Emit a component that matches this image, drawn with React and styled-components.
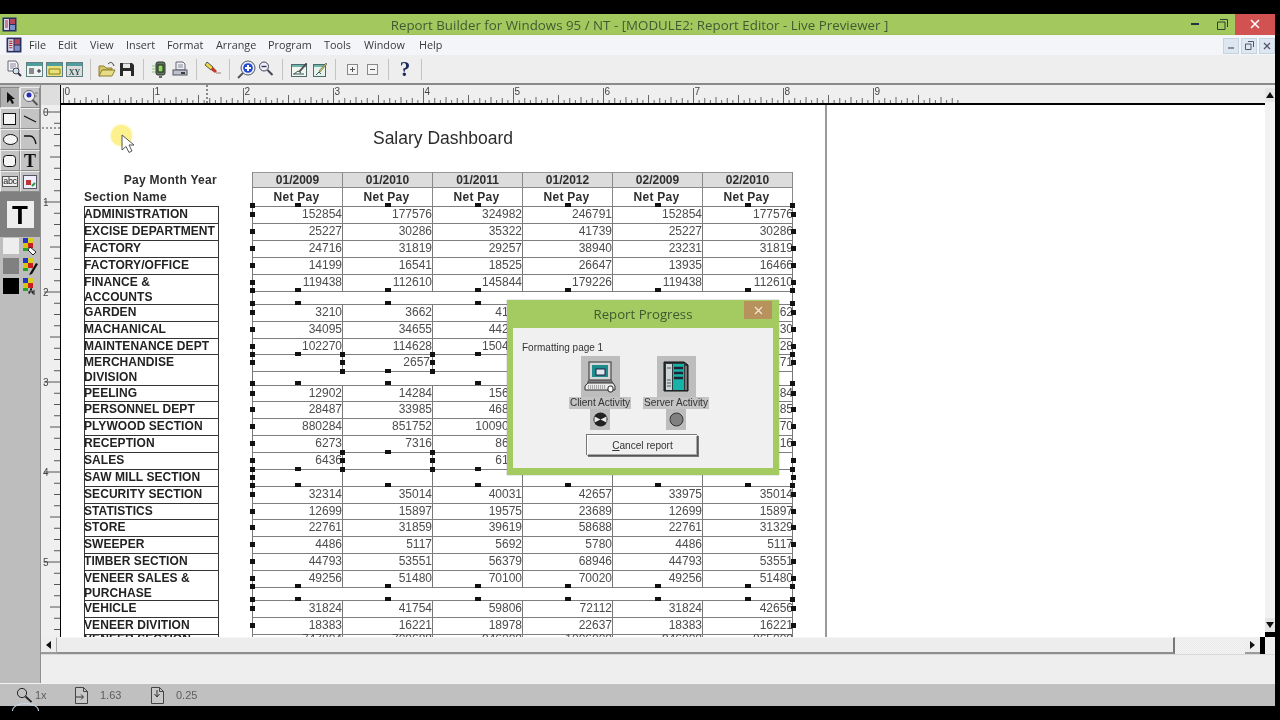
import React from "react";
import styled, { createGlobalStyle } from "styled-components";

const Global = createGlobalStyle`
  html, body { margin: 0; padding: 0; background: #000; }
  * { box-sizing: border-box; }
`;

const Screen = styled.div`
  position: relative; width: 1280px; height: 720px; background: #000; overflow: hidden;
  padding: 14px 5px 14px 0; display: flex; flex-direction: column;
  font-family: "Liberation Sans", Arial, sans-serif; filter: blur(.3px);
`;
const TitleBar = styled.div`
  height: 21px; flex: none; background: #a3c95e; display: flex; align-items: center; position: relative;
  padding-left: 2px; border-bottom: 1px solid #9cc056;
`;
const TitleText = styled.div`
  position: absolute; left: 0; right: 0; top: 2px; text-align: center; padding-left: 4px;
  font: 13.3px "Open Sans", sans-serif; color: #3f5a33; letter-spacing: 0.02px; white-space: nowrap;
`;
const WinControls = styled.div`
  margin-left: auto; display: flex; height: 100%; align-items: center;
`;
const WinBtn = styled.div`
  width: ${p => p.$w}px; height: 21px; display: flex; align-items: center; justify-content: center;
  background: ${p => p.$bg || "transparent"};
`;
const MenuBar = styled.div`
  height: 20px; flex: none; background: #f3f5f9; display: flex; align-items: center; padding-left: 6px;
`;
const MenuIcon = styled.div`width: 23px; height: 17px; display: flex;`;
const MenuItems = styled.div`display: flex; font: 10.8px "Open Sans", sans-serif; color: #3a3a3a; margin-top: -2px;`;
const MenuItem = styled.span`width: ${p => p.$w}px; white-space: nowrap;`;
const MdiButtons = styled.div`margin-left: auto; display: flex; gap: 2px; padding-top: 1px;`;
const MdiBtn = styled.div`
  width: 16px; height: 16px; background: #dde7f1; border: 1px solid #c6d3e0; display: flex;
  align-items: center; justify-content: center;
`;
const Toolbar = styled.div`
  height: 30px; flex: none; background: #eeeeee; display: flex; align-items: center; padding-left: 4px;
  border-bottom: 2px solid #8a8a8a;
`;
const ToolBtn = styled.div`
  width: 20px; height: 20px; display: flex; align-items: center; justify-content: center; flex: none;
`;
const Sep = styled.div`
  width: 1px; height: 21px; background: #c4c4c4; margin: 0 6px; flex: none;
`;
const Help = styled.span`font: bold 21px "Liberation Serif", serif; color: #1d2a5c; line-height: 20px;`;

const Workspace = styled.div`flex: 1; min-height: 0; display: flex;`;
const Palette = styled.div`
  width: 41px; flex: none; background: #bdbdbd; display: flex; flex-direction: column;
  border-right: 1px solid #8f8f8f;
`;
const ToolGrid = styled.div`
  display: grid; grid-template-columns: 20px 20px; grid-auto-rows: 21px; padding-top: 2px; background: #c8c8c8;
  height: 107px;
`;
const PalBtn = styled.div`
  display: flex; align-items: center; justify-content: center; background: ${p => p.$on ? "#b0b0b0" : "#c4c4c4"};
  border: 1px solid; border-color: ${p => p.$on ? "#888 #eee #eee #888" : "#eee #8c8c8c #8c8c8c #eee"};
`;
const SerifT = styled.span`font: bold 18px "Liberation Serif", serif; color: #111; line-height: 16px;`;
const AbcTag = styled.span`
  font: 9px "Liberation Sans", sans-serif; color: #222; border: 1px solid #555; background: #eee; line-height: 9px; letter-spacing: -.3px;
`;
const TextTool = styled.div`
  height: 45px; background: #808080; display: flex; align-items: center; justify-content: center;
`;
const TextToolBox = styled.div`
  width: 27px; height: 27px; background: #eeeeee; color: #000; display: flex; align-items: center; justify-content: center;
  font: bold 26px "Liberation Sans", sans-serif; line-height: 26px;
`;
const Swatches = styled.div`display: flex; flex-direction: column; gap: 4px; padding: 1px 0 0 3px;`;
const SwatchRow = styled.div`display: flex; align-items: center; gap: 3px; height: 16px;`;
const Swatch = styled.div`width: 16px; height: 16px; background: ${p => p.$c};`;

const Main = styled.div`flex: 1; min-width: 0; display: flex; flex-direction: column;`;
const ViewColumn = styled.div`flex: 1; min-width: 0; display: flex; flex-direction: column;`;
const RulerRow = styled.div`height: 20px; flex: none; display: flex; background: #efefef;`;
const Corner = styled.div`width: 19px; flex: none; background: #dedede;`;
const HRulerBox = styled.div`flex: 1; border-bottom: 2px solid #000; border-left: 1px solid #000; overflow: hidden;`;
const VTrack = styled.div`
  width: 10px; flex: none; background: #efefef; display: flex; flex-direction: column; align-items: center;
`;
const ViewRow = styled.div`flex: 1; min-height: 0; display: flex;`;
const VRulerBox = styled.div`
  width: 20px; flex: none; background: #efefef; border-right: 1px solid #000; overflow: hidden;
`;
const Canvas = styled.div`flex: 1; min-width: 0; background: #fff; overflow: hidden; position: relative;`;
const Page = styled.div`width: 766px; height: 100%; border-right: 2px solid #9a9a9a; padding: 22px 0 0 23px;`;
const ReportTitle = styled.div`
  width: 718px; text-align: center; font-size: 17.5px; line-height: 22px; color: #2c2c2c; margin-bottom: 23px;
`;
const HeadRow = styled.div`display: flex; height: ${p => p.$h}px; align-items: center;`;
const HeadLabel = styled.div`
  width: 135px; flex: none; font-size: 12px; font-weight: bold; color: #2e2e2e; letter-spacing: .3px;
  text-align: ${p => p.$right ? "right" : "left"}; padding-right: ${p => p.$right ? 2 : 0}px;
`;
const Gutter = styled.div`width: 33px; flex: none;`;
const HeadCells = styled.div`display: flex; height: 100%; border-left: 1px solid #888;`;
const HeadCell = styled.div`
  width: 90px; height: 100%; display: flex; align-items: center; justify-content: center; font-size: 12px; font-weight: bold;
  color: #2e2e2e; border-right: 1px solid #888; border-top: ${p => p.$top ? "1px solid #999" : "none"};
  background: ${p => p.$top ? "#dcdcdc" : "#fff"};
  border-bottom: ${p => p.$top ? "1px solid #888" : "none"};
  letter-spacing: ${p => p.$top ? 0 : .3}px; padding-right: ${p => p.$top ? 0 : 2}px;
`;
const Row = styled.div`display: flex; height: ${p => p.$h}px;`;
const Label = styled.div`
  width: 135px; flex: none; border-top: 1px solid #333; border-right: 1px solid #333; box-shadow: inset 1px 0 #333;
  font-size: 12px; font-weight: bold; color: #222; line-height: 15px; letter-spacing: .07px; white-space: pre; overflow: hidden;
`;
const ClippedText = styled.div`margin-top: -3px;`;
const DataWrap = styled.div`
  width: 541px; flex: none; border-top: 1px solid #7e7e7e; border-left: 1px solid #777; border-right: 1px solid #777;
`;
const Cells = styled.div`
  display: flex; height: 16px; border-bottom: ${p => p.$closed ? "1px solid #7e7e7e" : "none"}; box-sizing: content-box;
`;
const Cell = styled.div`
  width: 90px; flex: none; text-align: right; font-size: 12px; line-height: 15px; color: #4c4c4c;
  border-right: ${p => p.$last ? "none" : "1px solid #777"}; white-space: nowrap; padding-right: ${p => p.$inset ? 2 : 0}px;
`;
const Handle = styled.div.attrs(p => ({ style: { left: p.$x - 2.5 - 61, top: p.$y - 2 - 105 } }))`
  position: absolute; width: ${p => p.$wide ? 6 : 5}px; height: ${p => p.$wide ? 4 : 5}px; background: #111;
`;
const Highlight = styled.div`
  position: absolute; left: 50px; top: 20px; width: 21px; height: 21px; border-radius: 50%; background: #fdf08e;
  box-shadow: 0 0 3px #fdf08e;
`;
const CursorPos = styled.div`position: absolute; left: 60px; top: 29px; width: 14px; height: 20px;`;

const HScroll = styled.div`height: 17px; flex: none; display: flex; background: #efefef;`;
const ScrollArrow = styled.div`
  width: 15px; flex: none; background: #eeeeee; display: flex; align-items: center; justify-content: center;
  border-bottom: 2px solid #9a9a9a;
`;
const Thumb = styled.div`
  width: 1119px; flex: none; background: #ededed; border: 1px solid #f5f5f5; border-right: 2px solid #777; border-bottom: 2px solid #8e8e8e;
  border-left: 1px solid #aaa;
`;
const Dither = styled.div`
  flex: 1; background: repeating-conic-gradient(#f6f6f6 0 25%, #e8e8e8 0 50%) 0 0 / 2px 2px; 
`;
const BlackEnd = styled.div`width: 5px; flex: none; background: #000;`;
const ScrollTail = styled.div`width: 10px; flex: none;`;
const Gap = styled.div`height: 29px; flex: none; background: #eeeeee; border-top: 1px solid #d8d8d8;`;
const VArrow = styled.div`
  width: 10px; height: ${p => p.$h}px; margin-top: ${p => p.$mt || 0}px; display: flex; align-items: center; justify-content: center;
  background: #e6e6e6;
`;
const VThumbArea = styled.div`flex: 1; width: 100%; background: #f2f2f2; position: relative;`;
const VCornerBlack = styled.div`height: 5px; width: 100%; background: #000;`;
const StatusBar = styled.div`
  height: 23px; flex: none; background: #c0c0c0; border-top: 1px solid #f2f2f2; display: flex; align-items: center;
  padding-left: 16px; font: 11px "Liberation Sans", sans-serif; color: #5e5e5e; position: relative;
`;
const StatusSlot = styled.div`width: ${p => p.$w}px; flex: none; display: flex; align-items: center; gap: ${p => p.$gap || 4}px;`;
const Arc = styled.div`
  position: absolute; left: 12px; top: 19px; width: 27px; height: 8px; border-radius: 50% 50% 0 0 / 100% 100% 0 0;
  border: 1px solid #c9d9e6; border-bottom: none; overflow: hidden;
`;

/* Dialog */
const Dialog = styled.div`
  position: absolute; left: 507px; top: 300px; width: 272px; height: 175px; background: #a4ca62;
  padding: 0 6px 7px 6px; display: flex; flex-direction: column; box-shadow: 0 0 1px #777;
`;
const DialogHead = styled.div`
  height: 28px; flex: none; display: flex; align-items: flex-start; justify-content: center; position: relative;
  font: 13.2px "Open Sans", sans-serif; color: #3a5b2e; padding-top: 5px;
`;
const DialogClose = styled.div`
  position: absolute; right: 1px; top: 1px; width: 28px; height: 18px; background: #b8925c; display: flex; align-items: center; justify-content: center;
`;
const DialogBody = styled.div`
  flex: 1; background: #f0f0f0; padding: 14px 0 0 9px; display: flex; flex-direction: column;
`;
const Formatting = styled.div`font-size: 10px; color: #333; line-height: 12px;`;
const Activities = styled.div`display: flex; margin-top: 2px; padding-left: 48px; gap: 14px;`;
const Activity = styled.div`display: flex; flex-direction: column; align-items: center; width: ${p => p.$w}px;`;
const ActivityIcon = styled.div`
  width: 39px; height: 41px; background: #bdbdbd; display: flex; align-items: center; justify-content: center;
`;
const ActivityName = styled.div`
  background: #c4c4c4; font-size: 10.1px; color: #333; line-height: 12px; white-space: nowrap; padding: 0 1px;
`;
const Lamp = styled.div`
  width: 20px; height: 21px; margin-top: 0; background: #bdbdbd; display: flex; align-items: center; justify-content: center;
`;
const CancelRow = styled.div`display: flex; padding-left: 65px; margin-top: 5px;`;
const CancelBtn = styled.div`
  width: 111px; height: 21px; background: #f0f0f0; font-size: 10.1px; color: #333; display: flex; align-items: center; justify-content: center;
  border: 1px solid; border-color: #fff #555 #555 #fff; box-shadow: 1px 1px 0 #777, inset -1px -1px 0 #aaa, -1px -1px 0 #777;
`;
const Under = styled.span`text-decoration: underline;`;

/* Icons */
const Svg = ({ w = 16, h = 16, children, vb }) => (
  <svg width={w} height={h} viewBox={vb || `0 0 ${w} ${h}`} style={{ display: "block" }}>{children}</svg>
);
const IPreview = () => <Svg w={18} h={18}><path d="M3 1h8l2 3v7H3z" fill="#f5f5f5" stroke="#667" /><path d="M5 4h6M5 6h6M5 8h4" stroke="#8a8aa0" /><circle cx="11" cy="11" r="3" fill="#cfe3ee" stroke="#445" /><path d="M13 13l3 3" stroke="#334" strokeWidth="2" /></Svg>;
const IBand = ({ kind }) => (
  <Svg w={17} h={15}>
    <rect x=".5" y=".5" width="16" height="14" fill={kind === "y" ? "#e9e27a" : kind === "xy" ? "#dcdcdc" : "#eef3f0"} stroke="#5f7f80" />
    <rect x="1" y="1" width="15" height="3" fill="#4f9d9d" />
    {kind === "p" && <path d="M3 7h5M3 9h5M3 11h5M11 9h4M13 7v4" stroke="#223" />}
    {kind === "y" && <path d="M3 7h11v5H3z" fill="none" stroke="#8a7a20" />}
    {kind === "xy" && <text x="8.5" y="12.5" textAnchor="middle" fontSize="8" fontWeight="bold" fontFamily="Liberation Serif" fill="#355">XY</text>}
  </Svg>
);
const IFolder = () => <Svg w={18} h={16}><path d="M1 5h5l2 2h6v2H5L2 15H1z" fill="#d7c765" stroke="#8a7f35" /><path d="M4 9h13l-3 6H1z" fill="#e8dc84" stroke="#8a7f35" /><path d="M10 3c2-2 4-2 5 0l1 2" fill="none" stroke="#333" /></Svg>;
const IFloppy = () => <Svg w={14} h={14}><path d="M0 1h12l2 2v11H0z" fill="#2a2a2a" /><rect x="3" y="1.5" width="7" height="4.5" fill="#e8e8e8" /><rect x="3" y="9" width="8" height="5" fill="#f2f2f2" /></Svg>;
const ISignal = () => <Svg w={16} h={17}><path d="M0 5h3M0 8h3M0 11h3" stroke="#86c77a" /><rect x="4" y="1" width="9" height="13" rx="2" fill="#5c7a5c" stroke="#333" /><rect x="6" y="4" width="5" height="7" fill="#8fdb5e" stroke="#222" /><path d="M7 15h3v2H7z" fill="#666" /></Svg>;
const IPrinter = () => <Svg w={16} h={16}><path d="M4 1h7l2 2v6H4z" fill="#eef1f4" stroke="#667" /><path d="M6 4h5M6 6h5" stroke="#889" /><rect x="1" y="9" width="14" height="5" fill="#bcc2c8" stroke="#556" /><path d="M9 12h4" stroke="#111" strokeWidth="1.5" /></Svg>;
const IEraser = () => <Svg w={18} h={16}><path d="M3 1l6 5-2 3-6-5z" fill="#ecd93f" stroke="#555" /><path d="M9 6l4 4-2 2-4-3z" fill="#c0392b" /><path d="M12 12h5" stroke="#c4b5b5" strokeWidth="2" /></Svg>;
const IZoomIn = () => <Svg w={19} h={19}><path d="M6 13l-5 5" stroke="#555" strokeWidth="2" /><circle cx="11" cy="8" r="7" fill="#e6eef6" stroke="#556" /><circle cx="11" cy="8" r="4.8" fill="#2348cc" /><path d="M8 8h6M11 5v6" stroke="#fff" strokeWidth="2" /></Svg>;
const IZoomOut = () => <Svg w={16} h={16}><circle cx="6" cy="5.5" r="4.5" fill="#eef" stroke="#445" /><path d="M3.5 5.5h5" stroke="#334" strokeWidth="1.4" /><path d="M9.5 9l5 5" stroke="#445" strokeWidth="2" /></Svg>;
const IChart = ({ small }) => (
  <Svg w={17} h={17}>
    <rect x={small ? 2.5 : .5} y="3.5" width={small ? 12 : 15} height="12" fill={small ? "#e7f2ea" : "#f2f5f0"} stroke="#4c6a6a" />
    <rect x={small ? 3 : 1} y="4" width={small ? 11 : 14} height="2" fill="#6fb3ad" />
    <path d={small ? "M5 14l3-3 2 2" : "M2 13h11M3 13l4-3 3 2"} stroke="#355" fill="none" />
    <path d="M8 10l7-8 1 1-7 8z" fill={small ? "#d8cf5a" : "#555"} stroke="#333" strokeWidth=".5" />
  </Svg>
);
const IBox = ({ plus }) => <Svg w={11} h={11}><rect x=".5" y=".5" width="10" height="10" fill="#f4f4f4" stroke="#888" /><path d={plus ? "M3 5.5h5M5.5 3v5" : "M3 5.5h5"} stroke="#555" /></Svg>;
const AppIcon = ({ s = 15 }) => (
  <svg width={s} height={s} viewBox="0 0 15 15" style={{ display: "block" }}>
    <rect x=".5" y=".5" width="14" height="14" fill="#26305e" />
    <rect x="2" y="2" width="5" height="11" fill="#d9d4e8" />
    <rect x="8" y="2" width="5" height="5" fill="#b4475e" />
    <rect x="8" y="8" width="5" height="5" fill="#7c8fc9" />
    <path d="M3 4h3M3 6h3M3 8h3M3 10h3" stroke="#a33" />
  </svg>
);
const ArrowTool = () => <Svg w={12} h={14}><path d="M3 1v11l3-3 2 4 2-1-2-4h3z" fill="#111" /></Svg>;
const ZoomTool = () => <Svg w={17} h={17}><circle cx="7" cy="7" r="5.5" fill="#f2f2f2" stroke="#667" /><circle cx="7" cy="6" r="2.5" fill="#2a2ab8" /><path d="M10.5 11l5 5" stroke="#555" strokeWidth="2" /><path d="M13 4h3M13 7h2" stroke="#777" /></Svg>;
const Wheel = ({ kind }) => (
  <Svg w={16} h={17}>
    <rect x="1" y="0" width="5" height="5" fill="#2233cc" /><rect x="6" y="0" width="5" height="5" fill="#d8d21c" />
    <rect x="1" y="5" width="5" height="5" fill="#d8c414" /><rect x="6" y="5" width="5" height="5" fill="#c91f1f" />
    <rect x="1" y="10" width="5" height="3" fill="#28a428" />
    {kind === 0 && <path d="M8 9l6 5-3 3-5-5z" fill="#fff" stroke="#222" />}
    {kind === 1 && <path d="M14 5l-6 10-1 2 3-1 6-10z" fill="#111" />}
    {kind === 2 && <path d="M7 16l2-6 2 6M6 14h6M12 12v5" stroke="#222" fill="none" />}
  </Svg>
);
const Mag = () => <Svg w={16} h={16}><circle cx="6" cy="6" r="4.6" fill="none" stroke="#222" /><path d="M9.5 9.5l6 5.5" stroke="#222" strokeWidth="1.8" /></Svg>;
const PageIcon = ({ down }) => (
  <Svg w={13} h={17}>
    <path d="M.5.5h8l4 4v12H.5z" fill="#c8c8c8" stroke="#444" /><path d="M8.5.5v4h4" fill="none" stroke="#444" />
    {down ? <path d="M6 3v6M3.5 7L6 10l2.5-3" stroke="#333" fill="none" /> : <path d="M1 10h7M6 7.5L8.5 10 6 12.5" stroke="#333" fill="none" />}
  </Svg>
);
const Computer = () => (
  <Svg w={32} h={33}>
    <rect x="5" y="2" width="22" height="18" fill="#d6d6d6" stroke="#333" />
    <rect x="8" y="5" width="16" height="12" fill="#1d8c8c" />
    <rect x="12" y="9" width="9" height="6" fill="#dfe8ef" stroke="#224" />
    <path d="M4 21h24v2H4z" fill="#bbb" stroke="#444" />
    <path d="M1 26l3-3h25l2 3v4H1z" fill="#e8e8e8" stroke="#333" />
    <path d="M4 26h18M4 28h18" stroke="#666" strokeDasharray="1 1" />
    <rect x="24" y="26" width="5" height="6" rx="2" fill="#fff" stroke="#222" />
  </Svg>
);
const Server = () => (
  <Svg w={30} h={33}>
    <path d="M3 2h20l4 3v26H3z" fill="#2e3a3e" stroke="#111" />
    <rect x="5" y="4" width="6" height="26" fill="#cfd6d6" />
    <rect x="12" y="4" width="11" height="26" fill="#17b3a8" />
    <path d="M13 8h9M13 13h9M13 18h9" stroke="#223" strokeWidth="2.4" />
    <path d="M6 8h4M6 20h4M6 23h4M6 26h4" stroke="#556" />
    <rect x="24" y="6" width="2" height="24" fill="#777" />
  </Svg>
);
const LampOn = () => <Svg w={15} h={15}><circle cx="7.5" cy="7.5" r="7" fill="#222" /><path d="M3.5 3l8 0L7.5 7.5zM3.5 12l8 0L7.5 7.5z" fill="#222" /><path d="M1.5 4.5L7.5 7.5 1.5 10.5zM13.5 4.5L7.5 7.5 13.5 10.5z" fill="#e8e8e8" /></Svg>;
const LampOff = () => <Svg w={15} h={15}><circle cx="7.5" cy="7.5" r="6.5" fill="#808080" stroke="#333" /></Svg>;
const Cursor = () => <Svg w={14} h={20}><path d="M1 1v15l4-3.5 3 6 3-1.5-3-6h5z" fill="#fff" stroke="#555" /></Svg>;
const Tri = ({ d }) => {
  const p = { l: "M7 1v8L2 5z", r: "M2 1v8l5-4z", u: "M5 2l4 6H1z", d: "M1 2h8L5 8z" }[d];
  return <Svg w={10} h={10}><path d={p} fill="#111" /></Svg>;
};

/* Rulers */
const HRuler = () => {
  const ticks = [];
  for (let i = 0; i <= 159; i++) {
    const x = 2.5 + i * 5.625;
    const h = i % 16 === 0 ? 15 : i % 8 === 0 ? 8 : i % 4 === 0 ? 6 : i % 2 === 0 ? 5 : 3;
    ticks.push(<line key={i} x1={x} x2={x} y1={18 - h} y2={18} stroke="#666" />);
  }
  return (
    <svg width="1204" height="18" style={{ display: "block" }}>
      {ticks}
      {[0, 1, 2, 3, 4, 5, 6, 7, 8, 9].map(n => <text key={n} x={3.5 + n * 90} y="10" fontSize="10" fontFamily="Liberation Sans" fill="#444">{n}</text>)}
      <line x1="146" x2="146" y1="0" y2="18" stroke="#222" strokeDasharray="2 2" />
    </svg>
  );
};
const VRuler = () => {
  const ticks = [];
  for (let i = 0; i <= 46; i++) {
    const y = 7 + i * 11.25;
    const w = i % 8 === 0 ? 16 : i % 4 === 0 ? 10 : 6;
    ticks.push(<line key={i} x1={19 - w} x2={19} y1={y} y2={y} stroke="#555" />);
  }
  return (
    <svg width="19" height="532" style={{ display: "block" }}>
      {ticks}
      {[0, 1, 2, 3, 4, 5].map(n => <text key={n} x="2" y={11 + n * 90} fontSize="10" fontFamily="Liberation Sans" fill="#444">{n}</text>)}
      <line x1="1" x2="19" y1="23" y2="23" stroke="#444" strokeDasharray="2 2" />
    </svg>
  );
};

const menu = [["File", 29], ["Edit", 32], ["View", 36], ["Insert", 41], ["Format", 49], ["Arrange", 52], ["Program", 56], ["Tools", 40], ["Window", 55], ["Help", 40]];
const periods = ["01/2009", "01/2010", "01/2011", "01/2012", "02/2009", "02/2010"];
const rows = [
  ["ADMINISTRATION", 17, [152854, 177576, 324982, 246791, 152854, 177576]],
  ["EXCISE DEPARTMENT", 17, [25227, 30286, 35322, 41739, 25227, 30286]],
  ["FACTORY", 17, [24716, 31819, 29257, 38940, 23231, 31819]],
  ["FACTORY/OFFICE", 17, [14199, 16541, 18525, 26647, 13935, 16466]],
  ["FINANCE &\nACCOUNTS", 30, [119438, 112610, 145844, 179226, 119438, 112610]],
  ["GARDEN", 17, [3210, 3662, 4162, 4862, 3210, 3662]],
  ["MACHANICAL", 17, [34095, 34655, 44230, 52130, 34095, 34630]],
  ["MAINTENANCE DEPT", 16, [102270, 114628, 150428, 182428, 102270, 114628]],
  ["MERCHANDISE\nDIVISION", 31, ["", 2657, "", "", "", 2671]],
  ["PEELING", 16, [12902, 14284, 15684, 19284, 12902, 14284]],
  ["PERSONNEL DEPT", 17, [28487, 33985, 46885, 52485, 28487, 33985]],
  ["PLYWOOD SECTION", 17, [880284, 851752, 1009070, 1204070, 880284, 851770]],
  ["RECEPTION", 17, [6273, 7316, 8616, 9316, 6273, 7316]],
  ["SALES", 17, [6436, "", 6136, "", "", ""]],
  ["SAW MILL SECTION", 17, ["", "", "", "", "", ""]],
  ["SECURITY SECTION", 17, [32314, 35014, 40031, 42657, 33975, 35014]],
  ["STATISTICS", 16, [12699, 15897, 19575, 23689, 12699, 15897]],
  ["STORE", 17, [22761, 31859, 39619, 58688, 22761, 31329]],
  ["SWEEPER", 17, [4486, 5117, 5692, 5780, 4486, 5117]],
  ["TIMBER SECTION", 17, [44793, 53551, 56379, 68946, 44793, 53551]],
  ["VENEER SALES &\nPURCHASE", 30, [49256, 51480, 70100, 70020, 49256, 51480]],
  ["VEHICLE", 17, [31824, 41754, 59806, 72112, 31824, 42656]],
  ["VENEER DIVITION", 17, [18383, 16221, 18978, 22637, 18383, 16221]],
  ["VENEER SECTION", 17, [747804, 700688, 946000, 1006000, 946000, 865000]],
];

const centers = [297, 387, 477, 567, 657, 747];
const buildHandles = () => {
  const out = [];
  [[205, centers], [290, centers], [303, centers], [354, centers.filter(c => c !== 387)], [371, [387]], [383, centers],
   [452, [387]], [469, centers.filter(c => c !== 387)], [485, centers], [586, centers], [599, centers]].forEach(([y, xs]) => {
    xs.forEach(x => out.push({ x, y, wide: true }));
    if (y !== 452 && y !== 371) { out.push({ x: 252, y }); out.push({ x: 792, y }); }
  });
  let y = 206;
  rows.slice(0, 23).forEach(r => {
    out.push({ x: 252, y: y + 8 });
    out.push({ x: 793, y: y + 8 });
    y += r[1];
  });
  [[342, 354], [342, 362], [342, 371], [432, 354], [432, 362], [432, 371], [342, 452], [342, 460], [342, 469], [432, 452], [432, 460], [432, 469]].forEach(([x, yy]) => out.push({ x, y: yy }));
  return out;
};
const handles = buildHandles();

const tools = [
  <IPreview />, <IBand kind="p" />, <IBand kind="y" />, <IBand kind="xy" />, null,
  <IFolder />, <IFloppy />, null,
  <ISignal />, <IPrinter />, null,
  <IEraser />, null,
  <IZoomIn />, <IZoomOut />, null,
  <IChart />, <IChart small />, null,
  <IBox plus />, <IBox />, null,
  <Help>?</Help>, null,
];

export default function App() {
  return (
    <Screen>
      <Global />
      <TitleBar>
        <AppIcon />
        <TitleText>Report Builder for Windows 95 / NT - [MODULE2: Report Editor - Live Previewer ]</TitleText>
        <WinControls>
          <WinBtn $w={30}><Svg w={10} h={3}><rect width="8" height="2" x="1" y="0" fill="#234" /></Svg></WinBtn>
          <WinBtn $w={25}><Svg w={11} h={11}><path d="M3 .5h7.5V8M.5 3h7.5v7.5H.5z" fill="none" stroke="#2c4030" /></Svg></WinBtn>
          <WinBtn $w={40} $bg="#d25252"><Svg w={10} h={10}><path d="M1 1l8 8M9 1l-8 8" stroke="#fff" strokeWidth="1.6" /></Svg></WinBtn>
        </WinControls>
      </TitleBar>
      <MenuBar>
        <MenuIcon><AppIcon s={16} /></MenuIcon>
        <MenuItems>
          {menu.map(([m, w]) => <MenuItem key={m} $w={w}>{m}</MenuItem>)}
        </MenuItems>
        <MdiButtons>
          <MdiBtn><Svg w={8} h={8}><path d="M1 6h6" stroke="#667" strokeWidth="1.4" /></Svg></MdiBtn>
          <MdiBtn><Svg w={9} h={9}><path d="M3 .5h5.5V6M.5 3h5.5v5.5H.5z" fill="none" stroke="#556" /></Svg></MdiBtn>
          <MdiBtn><Svg w={8} h={8}><path d="M1 1l6 6M7 1l-6 6" stroke="#556" strokeWidth="1.3" /></Svg></MdiBtn>
        </MdiButtons>
      </MenuBar>
      <Toolbar>
        {tools.map((t, i) => t ? <ToolBtn key={i}>{t}</ToolBtn> : <Sep key={i} />)}
      </Toolbar>
      <Workspace>
        <Palette>
          <ToolGrid>
            <PalBtn $on><ArrowTool /></PalBtn>
            <PalBtn><ZoomTool /></PalBtn>
            <PalBtn><Svg w={14} h={12}><rect x=".5" y=".5" width="12" height="11" fill="#f4f4f4" stroke="#111" /></Svg></PalBtn>
            <PalBtn><Svg w={14} h={10}><path d="M1 2l12 6" stroke="#111" strokeWidth="1.2" /></Svg></PalBtn>
            <PalBtn><Svg w={15} h={11}><ellipse cx="7.5" cy="5.5" rx="7" ry="5" fill="#f4f4f4" stroke="#111" /></Svg></PalBtn>
            <PalBtn><Svg w={14} h={12}><path d="M1 2h6c3 0 5 3 6 8" fill="none" stroke="#111" strokeWidth="1.3" /></Svg></PalBtn>
            <PalBtn><Svg w={14} h={12}><rect x=".5" y=".5" width="12" height="11" rx="3" fill="#f4f4f4" stroke="#111" /></Svg></PalBtn>
            <PalBtn><SerifT>T</SerifT></PalBtn>
            <PalBtn><AbcTag>abc</AbcTag></PalBtn>
            <PalBtn><Svg w={14} h={14}><rect x=".5" y=".5" width="13" height="13" fill="#eef" stroke="#556" /><rect x="3" y="5" width="5" height="5" fill="#b33" /><path d="M9 11l3-3" stroke="#294" strokeWidth="2" /></Svg></PalBtn>
          </ToolGrid>
          <TextTool>
            <TextToolBox>T</TextToolBox>
          </TextTool>
          <Swatches>
            <SwatchRow><Swatch $c="#eeeeee" /><Wheel kind={0} /></SwatchRow>
            <SwatchRow><Swatch $c="#808080" /><Wheel kind={1} /></SwatchRow>
            <SwatchRow><Swatch $c="#000" /><Wheel kind={2} /></SwatchRow>
          </Swatches>
        </Palette>
        <Main>
          <ViewRow>
            <ViewColumn>
              <RulerRow>
                <Corner />
                <HRulerBox><HRuler /></HRulerBox>
              </RulerRow>
              <ViewRow>
                <VRulerBox><VRuler /></VRulerBox>
                <Canvas>
                  <Page>
                    <ReportTitle>Salary Dashboard</ReportTitle>
                    <HeadRow $h={16}>
                      <HeadLabel $right>Pay Month Year</HeadLabel>
                      <Gutter />
                      <HeadCells>{periods.map(p => <HeadCell key={p} $top>{p}</HeadCell>)}</HeadCells>
                    </HeadRow>
                    <HeadRow $h={18}>
                      <HeadLabel>Section Name</HeadLabel>
                      <Gutter />
                      <HeadCells>{periods.map(p => <HeadCell key={p}>Net Pay</HeadCell>)}</HeadCells>
                    </HeadRow>
                    {rows.map(([name, h, vals], r) => {
                      const cut = r === rows.length - 1;
                      return (
                        <Row key={name} $h={h}>
                          <Label>{cut ? <ClippedText>{name}</ClippedText> : name}</Label>
                          <Gutter />
                          <DataWrap>
                            <Cells $closed={h > 17}>
                              {vals.map((v, i) => (
                                <Cell key={i} $last={i === 5} $inset={v === 2657}>
                                  {cut ? <ClippedText>{v}</ClippedText> : v}
                                </Cell>
                              ))}
                            </Cells>
                          </DataWrap>
                        </Row>
                      );
                    })}
                  </Page>
                  <Highlight />
                  <CursorPos><Cursor /></CursorPos>
                  {handles.map((h, i) => <Handle key={i} $x={h.x} $y={h.y} $wide={h.wide} />)}
                </Canvas>
              </ViewRow>
            </ViewColumn>
            <VTrack>
              <VArrow $h={14} $mt={3}><Tri d="u" /></VArrow>
              <VThumbArea />
              <VArrow $h={14}><Tri d="d" /></VArrow>
              <VCornerBlack />
            </VTrack>
          </ViewRow>
          <HScroll>
            <ScrollArrow><Tri d="l" /></ScrollArrow>
            <Thumb />
            <Dither />
            <ScrollArrow><Tri d="r" /></ScrollArrow>
            <BlackEnd />
            <ScrollTail />
          </HScroll>
          <Gap />
        </Main>
      </Workspace>
      <StatusBar>
        <StatusSlot $w={59} $gap={3}><Mag /><span>1x</span></StatusSlot>
        <StatusSlot $w={76} $gap={12}><PageIcon /><span>1.63</span></StatusSlot>
        <StatusSlot $w={60} $gap={12}><PageIcon down /><span>0.25</span></StatusSlot>
        <Arc />
      </StatusBar>
      <Dialog>
        <DialogHead>
          Report Progress
          <DialogClose><Svg w={9} h={9}><path d="M1 1l7 7M8 1l-7 7" stroke="#f3e8d8" strokeWidth="1.2" /></Svg></DialogClose>
        </DialogHead>
        <DialogBody>
          <Formatting>Formatting page 1</Formatting>
          <Activities>
            <Activity $w={60}>
              <ActivityIcon><Computer /></ActivityIcon>
              <ActivityName>Client Activity</ActivityName>
              <Lamp><LampOn /></Lamp>
            </Activity>
            <Activity $w={64}>
              <ActivityIcon><Server /></ActivityIcon>
              <ActivityName>Server Activity</ActivityName>
              <Lamp><LampOff /></Lamp>
            </Activity>
          </Activities>
          <CancelRow>
            <CancelBtn><span><Under>C</Under>ancel report</span></CancelBtn>
          </CancelRow>
        </DialogBody>
      </Dialog>
    </Screen>
  );
}
